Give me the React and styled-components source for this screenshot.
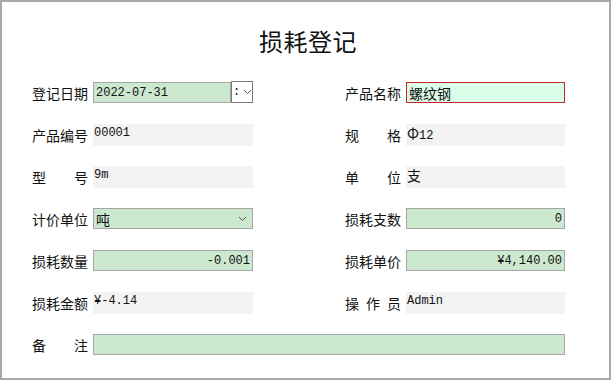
import React from 'react'
import styled, { createGlobalStyle } from 'styled-components'

const GlobalStyle = createGlobalStyle`
  body {
    margin: 0;
    background: #ffffff;
  }
`

const CJK = `"Noto Sans CJK SC", "Noto Sans", sans-serif`
const MONO = `"Liberation Mono", "Noto Sans CJK SC", monospace`

const Window = styled.div`
  width: 611px;
  height: 380px;
  box-sizing: border-box;
  border: 2px solid #a9a9a9;
  background: #ffffff;
  font-family: ${CJK};
  color: #111;
`
const Title = styled.div`
  padding: 24px 0 0 5px;
  height: 30px;
  line-height: 30px;
  text-align: center;
  font-size: 24px;
  letter-spacing: 0.5px;
`
const Form = styled.div`
  display: grid;
  grid-template-columns: 61px 160px 92px 61px 159px;
  grid-auto-rows: 22px;
  row-gap: 20px;
  padding: 26px 0 0 30px;
`
const Label = styled.div`
  width: 56px;
  font-size: 14px;
  line-height: 22px;
  white-space: nowrap;
  text-align: justify;
  text-align-last: justify;
  grid-column: ${p => p.$col};
`
const ReadOnly = styled.div`
  background: #f3f3f3;
  font-family: ${MONO};
  font-size: 12px;
  line-height: 16px;
  padding: 1px 0 0 1px;
  box-sizing: border-box;
  height: 22px;
  white-space: nowrap;
  grid-column: ${p => p.$col};
`
const CjkValue = styled.span`
  font-family: ${CJK};
  font-size: ${p => p.$size || 14}px;
`
const Input = styled.div`
  box-sizing: border-box;
  height: 21px;
  border: 1px solid ${p => (p.$focus ? '#c3262c' : '#a5a5a5')};
  background: ${p => (p.$focus ? '#dcfcea' : '#cce8cf')};
  display: flex;
  align-items: center;
  justify-content: ${p => (p.$right ? 'flex-end' : 'flex-start')};
  padding: 0 2px 0 2px;
  font-family: ${MONO};
  font-size: 12px;
  white-space: nowrap;
  grid-column: ${p => p.$col};
  ${p => p.$wide && 'grid-column: 2 / 6; width: 472px;'}
`
const DateCell = styled.div`
  display: flex;
  grid-column: 2;
`
const DateInput = styled(Input)`
  width: 138px;
`
const DropButton = styled.div`
  box-sizing: border-box;
  width: 22px;
  height: 22px;
  margin-top: -1px;
  border: 1px solid #7a7a7a;
  background: #fff;
  display: flex;
  align-items: center;
  font-family: ${MONO};
  font-size: 12px;
  padding-left: 1px;
`
const ChevronSlot = styled.span`
  display: flex;
  margin-left: 3px;
`
const Combo = styled(Input)`
  justify-content: space-between;
  padding-right: 5px;
`
const Chevron = () => (
  <svg width="9" height="6" viewBox="0 0 9 6">
    <path d="M1 1 L4.5 4.5 L8 1" fill="none" stroke="#555" strokeWidth="1" />
  </svg>
)

const App = () => (
  <>
    <GlobalStyle />
    <Window>
      <Title>损耗登记</Title>
      <Form>
        <Label $col={1}>登记日期</Label>
        <DateCell>
          <DateInput>2022-07-31</DateInput>
          <DropButton>
            :<ChevronSlot><Chevron /></ChevronSlot>
          </DropButton>
        </DateCell>
        <Label $col={4}>产品名称</Label>
        <Input $col={5} $focus><CjkValue>螺纹钢</CjkValue></Input>

        <Label $col={1}>产品编号</Label>
        <ReadOnly $col={2}>00001</ReadOnly>
        <Label $col={4}>规格</Label>
        <ReadOnly $col={5}><CjkValue $size={15}>Φ</CjkValue>12</ReadOnly>

        <Label $col={1}>型号</Label>
        <ReadOnly $col={2}>9m</ReadOnly>
        <Label $col={4}>单位</Label>
        <ReadOnly $col={5}><CjkValue>支</CjkValue></ReadOnly>

        <Label $col={1}>计价单位</Label>
        <Combo $col={2}><CjkValue>吨</CjkValue><Chevron /></Combo>
        <Label $col={4}>损耗支数</Label>
        <Input $col={5} $right>0</Input>

        <Label $col={1}>损耗数量</Label>
        <Input $col={2} $right>-0.001</Input>
        <Label $col={4}>损耗单价</Label>
        <Input $col={5} $right>¥4,140.00</Input>

        <Label $col={1}>损耗金额</Label>
        <ReadOnly $col={2}>¥-4.14</ReadOnly>
        <Label $col={4}>操作员</Label>
        <ReadOnly $col={5}>Admin</ReadOnly>

        <Label $col={1}>备注</Label>
        <Input $wide />
      </Form>
    </Window>
  </>
)

export default App
